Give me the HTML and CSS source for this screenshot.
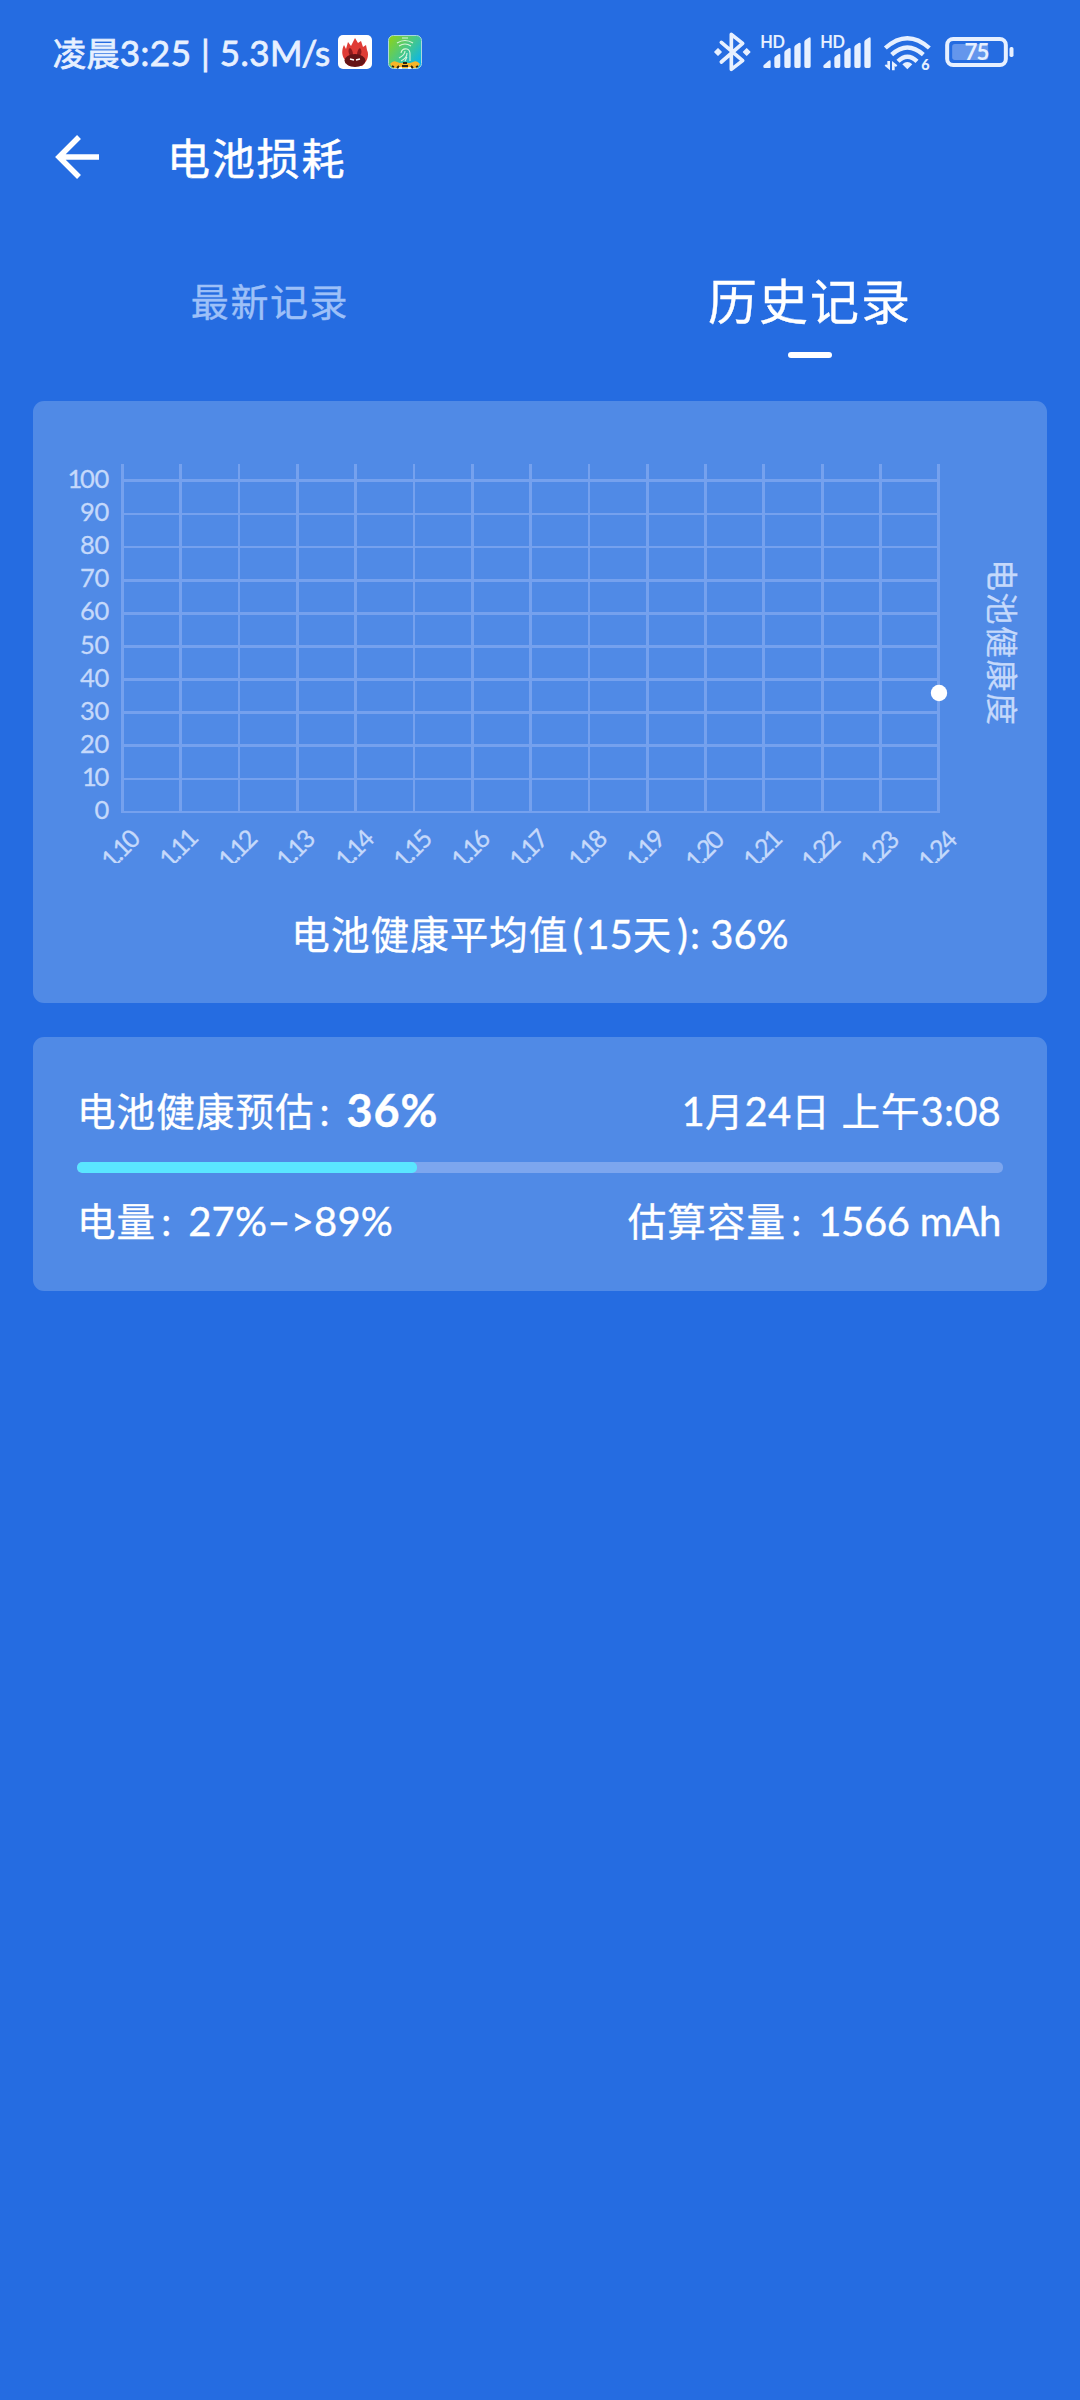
FILE: index.html
```html
<!DOCTYPE html>
<html lang="zh-CN">
<head>
<meta charset="utf-8">
<title>电池损耗</title>
<link rel="stylesheet" href="styles.css">
</head>
<body>
<div class="screen">
  <header class="status">
    <div class="status-left">
      <span class="status-text"><span class="status-cn">凌晨</span>3:25 | 5.3<span class="unit">M/s</span></span>
      <svg class="app-icon" viewBox="0 0 34 34">
        <rect width="34" height="34" rx="5" fill="#fff"/>
        <path d="M7 25C3 20 4 14 6 10l2 4 2-7 3 4 4-8 3 5 3-2 2 6 3-2 1 5c3 6-1 13-5 16H11z" fill="#df3b35"/>
        <path d="M12 21c-2-4-2-7 0-8 2 1 3 4 3 7h4c0-3 1-6 3-7 2 2 2 5 0 8z" fill="#8c1a1d"/>
        <ellipse cx="17" cy="25.500" rx="10.500" ry="6.500" fill="#651417"/>
        <path d="M12 24l4 1M22 24l-4 1" stroke="#fff" stroke-width="1.300"/>
      </svg>
      <svg class="app-icon app-icon-second" viewBox="0 0 34 34">
        <defs><linearGradient id="lime" x1="0" y1="0" x2="1" y2=".8"><stop offset="0" stop-color="#91d411"/><stop offset=".5" stop-color="#4bc982"/><stop offset="1" stop-color="#06b4ef"/></linearGradient></defs>
        <rect x=".5" y=".5" width="33" height="33" rx="5" fill="url(#lime)" stroke="#a9d8dd"/>
        <path d="M14 3h6M9 8q8-5 16 0M11 11q6-4 12 0M13 18q1-5 6-4 3 1 3 5v7M11 23q6-3 6-7M13 26q6-3 6-8M17 26l2-4" fill="none" stroke="#d8f5d9" stroke-width="1.100"/>
        <path d="M2 29q3-4 7-2l3 1h10l3-1q4-2 7 2l-3 4H5z" fill="#f7b527"/>
        <path d="M15 28h4M9 33l2-2M25 33l-2-2M14 31h6M4 31l2 1M30 31l-2 1" fill="none" stroke="#2c2410" stroke-width="1.800"/>
        <path d="M11 33h3M20 33h3" stroke="#fff" stroke-width="1.500"/>
      </svg>
    </div>
    <div class="status-right">
      <svg class="ico-bt" viewBox="44 36 111 120">
        <path d="M66 67L130 122 96 148V43L130 70 66 126" fill="none" stroke="#e7f0ff" stroke-width="11" stroke-linejoin="round" stroke-linecap="round"/>
        <path d="M56 87l9 9-9 9-9-9zM142 87l9 9-9 9-9-9z" fill="#e7f0ff" stroke="#e7f0ff" stroke-width="5" stroke-linejoin="round"/>
      </svg>
      <svg class="ico-signal" viewBox="186 45 150 99"><use href="#signal"/></svg>
      <svg class="ico-signal" viewBox="186 45 150 99">
        <g id="signal" fill="#e7f0ff">
          <text x="184" y="84" class="hd">HD</text>
          <path d="M193 138q0-3 5-6l10-9q7-5 7 2v16q0 3-3 3h-15q-4 0-4-4zM226 115q0-4 4-7l8-5q6-3 6 3v33q0 5-5 5h-8q-5 0-5-5zM256 98q0-4 4-7l9-6q6-3 6 3v51q0 5-5 5h-9q-5 0-5-5zM286 82q0-4 4-7l9-6q6-3 6 3v67q0 5-5 5h-9q-5 0-5-5zM316 66q0-4 4-7l9-6q6-3 6 3v83q0 5-5 5h-9q-5 0-5-5z"/>
        </g>
      </svg>
      <svg class="ico-wifi" viewBox="553 44 141 108">
        <g fill="none" stroke="#e7f0ff" stroke-width="13">
          <path d="M557 83Q623 24 689 83"/><path d="M576 103Q623 60 671 103"/><path d="M595 123Q623 95 652 123"/>
        </g>
        <path d="M608 132q15-14 30 0l-15 15zM563 122h8v28l-16-14 4-4 4 3zM577 122l16 13-4 5-4-3v13h-8z" fill="#e7f0ff"/>
        <text x="665" y="150" class="wifi-gen">6</text>
      </svg>
      <svg class="ico-battery" viewBox="737 51 206 90">
        <rect x="743" y="57" width="176" height="78" rx="18" fill="none" stroke="#e7f0ff" stroke-width="12"/>
        <rect x="758" y="72" width="108" height="48" rx="8" fill="#6496ec"/>
        <rect x="930" y="81" width="12" height="30" rx="5" fill="#e7f0ff"/>
        <text x="831" y="121" class="battery-level">75</text>
      </svg>
    </div>
  </header>

  <div class="toolbar">
    <svg class="back" viewBox="0 0 44 44"><path d="M24 2L4 22l20 20M4 22h40" fill="none" stroke="#fff" stroke-width="5.500"/></svg>
    <h1 class="title">电池损耗</h1>
  </div>

  <nav class="tabs">
    <div class="tab">最新记录</div>
    <div class="tab tab-active">历史记录</div>
  </nav>

  <main class="cards">
    <section class="card chart-card">
      <svg class="chart" viewBox="33 441 1014 422">
        <path class="grid" d="M121 479h819v3H121zM121 513h819v2H121zM121 546h819v2H121zM121 579h819v3H121zM121 612h819v3H121zM121 645h819v3H121zM121 678h819v3H121zM121 711h819v3H121zM121 744h819v3H121zM121 778h819v2H121zM121 811h819v2H121zM121 464h3v348h-3zM179 464h3v348h-3zM238 464h2v348h-2zM296 464h3v348h-3zM354 464h3v348h-3zM413 464h2v348h-2zM471 464h3v348h-3zM529 464h3v348h-3zM588 464h2v348h-2zM646 464h3v348h-3zM704 464h3v348h-3zM762 464h3v348h-3zM821 464h3v348h-3zM879 464h3v348h-3zM937 464h3v348h-3z"/>
        <g class="axis-y">
          <text x="109" y="488">1<tspan dx="-2">00</tspan></text><text x="109" y="521">90</text><text x="109" y="554">80</text><text x="109" y="587">70</text><text x="109" y="620">60</text><text x="109" y="654">50</text><text x="109" y="687">40</text><text x="109" y="720">30</text><text x="109" y="753">20</text><text x="109" y="786">1<tspan dx="-2">0</tspan></text><text x="109" y="819">0</text>
        </g>
        <g class="axis-x">
          <text transform="translate(126 856) rotate(-45)">1.10</text>
          <text transform="translate(184 855) rotate(-45)">1.11</text>
          <text transform="translate(243 856) rotate(-45)">1.12</text>
          <text transform="translate(301 856) rotate(-45)">1.13</text>
          <text transform="translate(360 856) rotate(-45)">1.14</text>
          <text transform="translate(418 856) rotate(-45)">1.15</text>
          <text transform="translate(476 856) rotate(-45)">1.16</text>
          <text transform="translate(534 856) rotate(-45)">1.17</text>
          <text transform="translate(593 856) rotate(-45)">1.18</text>
          <text transform="translate(651 856) rotate(-45)">1.19</text>
          <text transform="translate(710 857) rotate(-45)">1.20</text>
          <text transform="translate(768 856) rotate(-45)">1.21</text>
          <text transform="translate(826 857) rotate(-45)">1.22</text>
          <text transform="translate(885 857) rotate(-45)">1.23</text>
          <text transform="translate(943 857) rotate(-45)">1.24</text>
        </g>
        <circle cx="939" cy="693" r="8.200" fill="#fff"/>
        <text class="axis-title" transform="translate(990 559) rotate(90)">电池健康度</text>
      </svg>
      <p class="average"><span class="cn">电池健康平均值</span><span class="paren-open">(</span>15<span class="cn">天</span><span class="paren-close">)</span>: 36%</p>
    </section>

    <section class="card record">
      <div class="row">
        <span><span class="cn">电池健康预估</span><span class="colon">:</span><b class="health">36%</b></span>
        <span class="date">1<span class="cn">月</span>24<span class="cn">日</span> <span class="cn">上午</span>3:08</span>
      </div>
      <div class="bar"><div class="bar-fill"></div></div>
      <div class="row">
        <span><span class="cn">电量</span><span class="colon">:</span><span class="range">27%–&gt;89%</span></span>
        <span><span class="cn">估算容量</span><span class="colon">:</span><span class="capacity">1566 mAh</span></span>
      </div>
    </section>
  </main>
</div>
</body>
</html>
```
FILE: styles.css
```css
* { box-sizing: border-box; margin: 0; padding: 0; }
body { background: #256ce1; color: #fff; font-family: Lato, "Noto Sans CJK SC", sans-serif; -webkit-text-stroke: .35px currentColor; }
.screen { width: 1080px; height: 2400px; overflow: hidden; }
svg { display: block; -webkit-text-stroke: 0; }

.status { height: 104px; padding: 0 66px 0 53px; display: flex; justify-content: space-between; align-items: center; color: #e7f0ff; -webkit-text-stroke: .8px currentColor; }
.status-left { display: flex; align-items: center; }
.status-text { width: 285px; font-size: 35px; line-height: 40px; letter-spacing: .5px; white-space: pre; }
.status-cn { font-size: 33px; letter-spacing: .4px; }
.unit { letter-spacing: -1px; }
.app-icon { width: 34px; height: 34px; }
.app-icon-second { margin-left: 16px; }
.status-right { display: flex; align-items: flex-start; height: 40px; }
.ico-bt { width: 37px; height: 40px; margin-right: 10px; }
.ico-signal { width: 50px; height: 33px; margin: 3px 10px 0 0; overflow: visible; }
.ico-wifi { width: 47px; height: 36px; margin: 3px 14px 0 3px; overflow: visible; }
.ico-battery { width: 69px; height: 30px; margin-top: 5px; }
.hd { font: 700 49px Lato, sans-serif; letter-spacing: -1px; }
.wifi-gen { font: 900 43px Lato, sans-serif; fill: #e7f0ff; }
.battery-level { font: 700 67px Lato, sans-serif; letter-spacing: -3px; fill: #e7f0ff; text-anchor: middle; }

.toolbar { height: 106px; padding-left: 55px; display: flex; align-items: center; gap: 68px; }
.back { width: 44px; height: 44px; }
.title { font-size: 43px; font-weight: 400; line-height: 60px; letter-spacing: 1.8px; padding-top: 3px; -webkit-text-stroke: .5px currentColor; }

.tabs { height: 191px; display: grid; grid-template-columns: 1fr 1fr; }
.tab { display: flex; flex-direction: column; align-items: center; padding-top: 61px; font-size: 38px; line-height: 60px; letter-spacing: 1.6px; color: #9dc0f8; }
.tab-active { font-size: 49px; letter-spacing: 2px; color: #fff; }
.tab-active::after { content: ""; width: 44px; height: 6px; margin-top: 21px; border-radius: 3px; background: #fff; }

.cards { padding: 0 33px; display: flex; flex-direction: column; gap: 34px; }
.card { background: #508ae6; border-radius: 11px; font-size: 40px; line-height: 60px; }
.cn { font-size: 38.5px; letter-spacing: 1.1px; }
.chart-card { height: 602px; padding-top: 40px; }
.chart { width: 1014px; height: 422px; overflow: hidden; }
.grid { fill: #75a1ee; }
.axis-y text, .axis-x text { font-size: 25.5px; fill: #c5d9fb; stroke: #c5d9fb; stroke-width: .3px; }
.axis-y text { text-anchor: end; letter-spacing: -.3px; }
.axis-x text { font-size: 25px; text-anchor: middle; letter-spacing: -2.2px; }
.axis-title { font-size: 32px; letter-spacing: 1.5px; fill: #c5d9fb; stroke: #c5d9fb; stroke-width: .3px; }
.average { margin-top: 41px; text-align: center; }
.paren-open { padding: 0 3px 0 4px; }
.paren-close { padding: 0 2px 0 5px; }

.record { height: 254px; padding: 44px 44px 0; }
.row { height: 60px; display: flex; justify-content: space-between; padding: 0 2px 0 0; white-space: pre; }
.colon { display: inline-block; width: 32px; padding-left: 5px; }
.health { font-size: 45px; font-weight: 700; line-height: 50px; letter-spacing: .8px; vertical-align: -1px; }
.date { letter-spacing: .2px; }
.range { letter-spacing: .2px; }
.capacity { letter-spacing: -.3px; }
.bar { height: 11px; margin: 21px 0 18px; border-radius: 5px; background: #7da6ee; overflow: hidden; }
.bar-fill { width: 36.7%; height: 100%; border-radius: 5px; background: #5ae6ff; }
```
